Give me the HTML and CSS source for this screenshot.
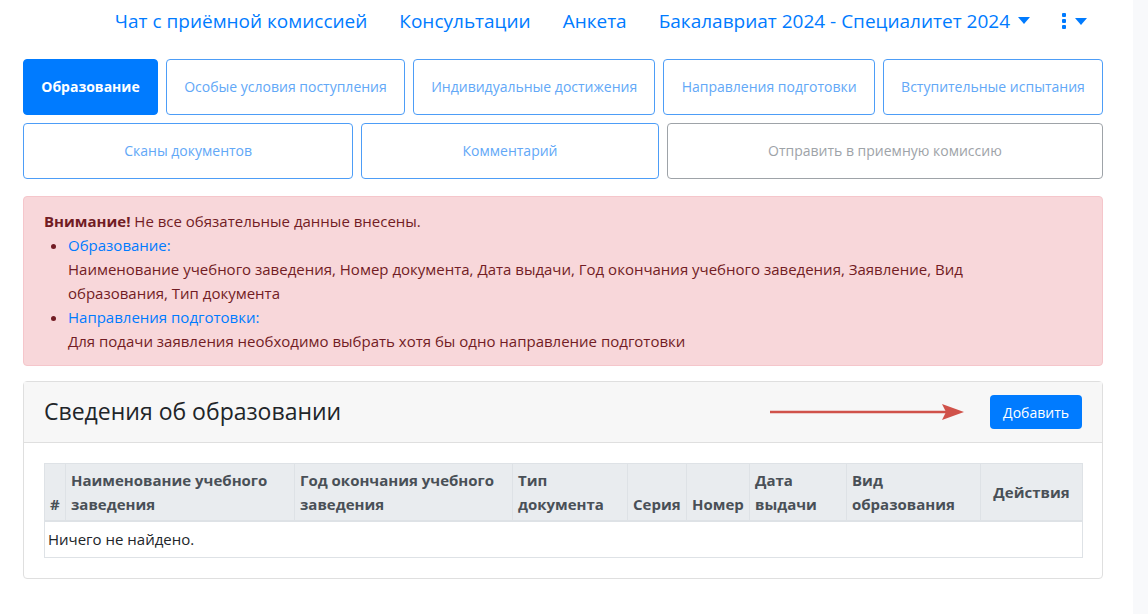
FILE: index.html
```html
<!DOCTYPE html>
<html lang="ru">
<head>
    <meta charset="UTF-8">
    <title>Анкета абитуриента</title>
    <link rel="stylesheet" href="styles.css">
</head>
<body>
    <div class="page">
        <main class="main">
            <!-- top menu -->
            <nav class="topnav">
                <a href="#" class="nav-link">Чат с приёмной комиссией</a>
                <a href="#" class="nav-link">Консультации</a>
                <a href="#" class="nav-link">Анкета</a>
                <a href="#" class="nav-link">Бакалавриат 2024 - Специалитет 2024 <span class="caret"></span></a>
                <a href="#" class="nav-link kebab"><span class="dots"><i></i><i></i><i></i></span><span class="caret"></span></a>
            </nav>

            <!-- application steps -->
            <div class="steps">
                <a href="#" class="step active">Образование</a>
                <a href="#" class="step">Особые условия поступления</a>
                <a href="#" class="step">Индивидуальные достижения</a>
                <a href="#" class="step">Направления подготовки</a>
                <a href="#" class="step">Вступительные испытания</a>
            </div>
            <div class="steps">
                <a href="#" class="step">Сканы документов</a>
                <a href="#" class="step">Комментарий</a>
                <a href="#" class="step disabled">Отправить в приемную комиссию</a>
            </div>

            <div class="alert">
                <strong>Внимание!</strong> Не все обязательные данные внесены.
                <ul class="alert-list">
                    <li>
                        <a href="#">Образование:</a><br>
                        Наименование учебного заведения, Номер документа, Дата выдачи, Год окончания учебного заведения, Заявление, Вид образования, Тип документа
                    </li>
                    <li>
                        <a href="#">Направления подготовки:</a><br>
                        Для подачи заявления необходимо выбрать хотя бы одно направление подготовки
                    </li>
                </ul>
            </div>

            <section class="card">
                <div class="card-header">
                    <h4 class="card-title">Сведения об образовании</h4>
                    <svg class="hint-arrow" width="194" height="16" viewBox="0 0 194 16">
                        <line x1="0" y1="8" x2="176" y2="8" stroke="#d0524a" stroke-width="2.5"/>
                        <polygon points="172,0 194,8 172,16 176,8" fill="#d0524a"/>
                    </svg>
                    <button class="btn-add">Добавить</button>
                </div>
                <div class="card-body">
                    <table class="grid">
                        <colgroup>
                            <col style="width:21px">
                            <col style="width:229px">
                            <col style="width:218px">
                            <col style="width:115px">
                            <col style="width:59px">
                            <col style="width:63px">
                            <col style="width:97px">
                            <col style="width:134px">
                            <col style="width:102px">
                        </colgroup>
                        <thead>
                            <tr>
                                <th>#</th>
                                <th>Наименование учебного заведения</th>
                                <th>Год окончания учебного заведения</th>
                                <th>Тип документа</th>
                                <th>Серия</th>
                                <th>Номер</th>
                                <th>Дата выдачи</th>
                                <th>Вид образования</th>
                                <th class="th-actions">Действия</th>
                            </tr>
                        </thead>
                        <tbody>
                            <tr>
                                <td colspan="9">Ничего не найдено.</td>
                            </tr>
                        </tbody>
                    </table>
                </div>
            </section>
        </main>
        <aside class="rail"></aside>
    </div>
</body>
</html>
```

FILE: styles.css
```css
* {
    margin: 0;
    padding: 0;
    box-sizing: border-box;
}

body {
    font-family: 'Open Sans', 'Noto Sans', sans-serif;
    font-size: 15px;
    line-height: 1.6;
    color: #212529;
    background-color: #fff;
}

a {
    color: #007bff;
    text-decoration: none;
}

.page {
    display: flex;
    min-height: 614px;
}

.main {
    width: 1133px;
    padding: 0 30px 0 23px;
}

.rail {
    flex: 1;
    background-color: #f8f9fb;
}

/* top menu */
.topnav {
    display: flex;
    justify-content: flex-end;
    align-items: center;
    height: 42px;
    margin-bottom: 17px;
}

.nav-link {
    font-size: 19px;
    padding: 0 16px;
    display: flex;
    align-items: center;
    white-space: nowrap;
}

.caret {
    display: inline-block;
    width: 0;
    height: 0;
    margin-left: 8px;
    border-top: 7px solid #007bff;
    border-left: 6px solid transparent;
    border-right: 6px solid transparent;
}

.kebab .caret {
    margin-left: 9px;
}

.dots {
    display: flex;
    flex-direction: column;
    gap: 2px;
}

.dots i {
    display: block;
    width: 4px;
    height: 4px;
    background-color: #007bff;
    border-radius: 1px;
}

/* steps */
.steps {
    display: flex;
    gap: 8px;
    margin-bottom: 8px;
}

.steps + .steps {
    margin-bottom: 17px;
}

.step {
    flex: 1 1 auto;
    min-width: 0;
    height: 56px;
    display: flex;
    align-items: center;
    justify-content: center;
    padding: 0 15px;
    border: 1px solid #4d9df7;
    border-radius: 4px;
    color: #62a8f7;
    font-size: 14px;
    white-space: nowrap;
}

.step.active {
    background-color: #007bff;
    border-color: #007bff;
    color: #fff;
    font-weight: bold;
}

.step.disabled {
    border-color: #9ea3a8;
    color: #9ea3a8;
}

/* alert */
.alert {
    background-color: #f8d7da;
    border: 1px solid #f5c6cb;
    border-radius: 4px;
    color: #721c24;
    padding: 12px 60px 12px 20px;
    margin-bottom: 15px;
}

.alert strong {
    font-weight: bold;
}

.alert-list {
    padding-left: 24px;
}

/* card */
.card {
    border: 1px solid #dfdfdf;
    border-radius: 4px;
}

.card-header {
    display: flex;
    align-items: center;
    padding: 13px 20px;
    background-color: #f7f7f7;
    border-bottom: 1px solid #dfdfdf;
}

.card-title {
    font-size: 23px;
    font-weight: 500;
    line-height: 1.2;
}

.hint-arrow {
    margin-left: auto;
    margin-right: 26px;
}

.btn-add {
    background-color: #007bff;
    color: #fff;
    border: none;
    border-radius: 4px;
    height: 34px;
    padding: 0 13px;
    font-family: 'Open Sans', 'Noto Sans', sans-serif;
    font-size: 14px;
}

.card-body {
    padding: 20px;
}

.grid {
    width: 100%;
    border-collapse: collapse;
    table-layout: fixed;
}

.grid th {
    background-color: #e9ecef;
    color: #495057;
    font-weight: bold;
    text-align: left;
    vertical-align: bottom;
    padding: 4px 5px;
    border: 1px solid #dee2e6;
    border-bottom-width: 2px;
}

.grid th.th-actions {
    text-align: center;
    vertical-align: middle;
}

.grid td {
    padding: 5px 2px 5px 3px;
    border: 1px solid #dee2e6;
    height: 36px;
}
```
